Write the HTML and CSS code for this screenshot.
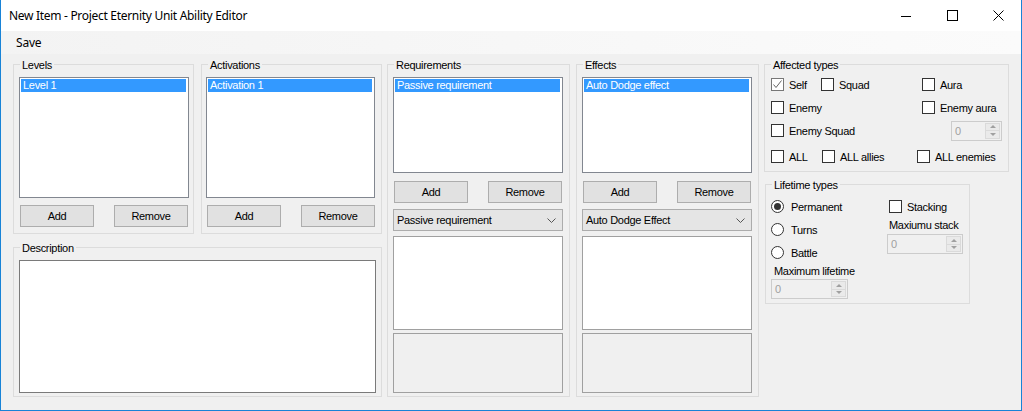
FILE: index.html
```html
<!DOCTYPE html>
<html>
<head>
<meta charset="utf-8">
<title>New Item - Project Eternity Unit Ability Editor</title>
<link rel="stylesheet" href="styles.css">
</head>
<body>
<div class="window">
  <div class="titlebar">
    <span class="title">New Item - Project Eternity Unit Ability Editor</span>
    <div class="controls">
      <div class="ctl"><svg width="10" height="10" viewBox="0 0 10 10"><line x1="0" y1="5.5" x2="10" y2="5.5" stroke="#000" stroke-width="1"/></svg></div>
      <div class="ctl"><svg width="11" height="11" viewBox="0 0 11 11"><rect x="0.5" y="0.5" width="10" height="10" fill="none" stroke="#000" stroke-width="1"/></svg></div>
      <div class="ctl"><svg width="11" height="11" viewBox="0 0 11 11"><path d="M0.5 0.5 L10.5 10.5 M10.5 0.5 L0.5 10.5" stroke="#000" stroke-width="1" fill="none"/></svg></div>
    </div>
  </div>
  <div class="menubar"><span class="menu-item">Save</span></div>
  <div class="client">
    <div class="col-left">
      <div class="row-top">
        <div class="gb gb-levels">
          <div class="gb-title">Levels</div>
          <div class="list list-a"><div class="item sel">Level 1</div></div>
          <div class="btnrow btnrow-a"><div class="btn">Add</div><div class="btn">Remove</div></div>
        </div>
        <div class="gb gb-act">
          <div class="gb-title">Activations</div>
          <div class="list list-b"><div class="item sel">Activation 1</div></div>
          <div class="btnrow btnrow-b"><div class="btn">Add</div><div class="btn">Remove</div></div>
        </div>
      </div>
      <div class="gb gb-desc">
        <div class="gb-title">Description</div>
        <div class="textbox"></div>
      </div>
    </div>
    <div class="gb gb-req">
      <div class="gb-title">Requirements</div>
      <div class="list list-c"><div class="item sel">Passive requirement</div></div>
      <div class="btnrow btnrow-c"><div class="btn">Add</div><div class="btn">Remove</div></div>
      <div class="combo"><span>Passive requirement</span><svg width="9" height="5" viewBox="0 0 9 5"><polyline points="0.5,0.5 4.5,4.5 8.5,0.5" fill="none" stroke="#555" stroke-width="1"/></svg></div>
      <div class="panel white"></div>
      <div class="panel grey"></div>
    </div>
    <div class="gb gb-eff">
      <div class="gb-title">Effects</div>
      <div class="list list-c"><div class="item sel">Auto Dodge effect</div></div>
      <div class="btnrow btnrow-c"><div class="btn">Add</div><div class="btn">Remove</div></div>
      <div class="combo"><span>Auto Dodge Effect</span><svg width="9" height="5" viewBox="0 0 9 5"><polyline points="0.5,0.5 4.5,4.5 8.5,0.5" fill="none" stroke="#555" stroke-width="1"/></svg></div>
      <div class="panel white"></div>
      <div class="panel grey"></div>
    </div>
    <div class="col-right">
      <div class="gb gb-aff">
        <div class="gb-title">Affected types</div>
        <div class="crow r1">
          <div class="chk w50"><span class="box checked"><svg width="11" height="11" viewBox="0 0 11 11"><polyline points="1.5,5.5 4,8.5 9.5,1.5" fill="none" stroke="#666" stroke-width="1"/></svg></span><span>Self</span></div>
          <div class="chk w101"><span class="box"></span><span>Squad</span></div>
          <div class="chk"><span class="box"></span><span>Aura</span></div>
        </div>
        <div class="crow">
          <div class="chk w151"><span class="box"></span><span>Enemy</span></div>
          <div class="chk"><span class="box"></span><span>Enemy aura</span></div>
        </div>
        <div class="crow">
          <div class="chk w180"><span class="box"></span><span>Enemy Squad</span></div>
          <div class="spin w51"><span class="spin-val">0</span><span class="spin-btns"><span class="up"></span><span class="dn"></span></span></div>
        </div>
        <div class="crow r4">
          <div class="chk w51"><span class="box"></span><span>ALL</span></div>
          <div class="chk w95"><span class="box"></span><span>ALL allies</span></div>
          <div class="chk"><span class="box"></span><span>ALL enemies</span></div>
        </div>
      </div>
      <div class="gb gb-life">
        <div class="gb-title">Lifetime types</div>
        <div class="life">
          <div class="life-l">
            <div class="crow r1"><div class="chk"><span class="radio on"></span><span class="rlabel">Permanent</span></div></div>
            <div class="crow"><div class="chk"><span class="radio"></span><span class="rlabel">Turns</span></div></div>
            <div class="crow"><div class="chk"><span class="radio"></span><span class="rlabel">Battle</span></div></div>
            <div class="flabel fl-life">Maximum lifetime</div>
            <div class="spin w77 sp-life"><span class="spin-val">0</span><span class="spin-btns"><span class="up"></span><span class="dn"></span></span></div>
          </div>
          <div class="life-r">
            <div class="crow r1 stk"><div class="chk"><span class="box"></span><span>Stacking</span></div></div>
            <div class="flabel fl-stack">Maxiumu stack</div>
            <div class="spin w76 sp-stack"><span class="spin-val">0</span><span class="spin-btns"><span class="up"></span><span class="dn"></span></span></div>
          </div>
        </div>
      </div>
    </div>
  </div>
</div>
</body>
</html>
```
FILE: styles.css
```css
* { box-sizing: border-box; }
html, body { margin: 0; padding: 0; background: #f0f0f0; }
body { font-family: "Liberation Sans", Arial, sans-serif; font-size: 11px; letter-spacing: -0.3px; color: #000; }

.window {
  width: 1022px; height: 411px;
  border-left: 1px solid #1883d7; border-right: 1px solid #1883d7; border-bottom: 1px solid #1883d7;
  background: #f0f0f0;
  display: flex; flex-direction: column;
  overflow: hidden;
}

.titlebar { height: 31px; background: #fff; display: flex; align-items: center; }
.title { font-family: "Noto Sans", "Open Sans", sans-serif; font-size: 12px; letter-spacing: -0.3px; padding-left: 8px; flex: 1; color: #000; }
.controls { display: flex; align-self: stretch; }
.ctl { width: 46px; display: flex; align-items: center; justify-content: center; }
.ctl svg { display: block; }

.menubar { height: 23px; background: linear-gradient(to right, #f3f3f3, #fbfbfb); display: flex; align-items: center; }
.menu-item { font-family: "Noto Sans", "Open Sans", sans-serif; font-size: 12px; letter-spacing: -0.2px; padding-left: 15px; }

.client { flex: 1; display: flex; align-items: flex-start; padding: 10px 0 0 12px; }

.col-left { display: flex; flex-direction: column; width: 369px; }
.row-top { display: flex; gap: 7px; }

.gb { border: 1px solid #dcdcdc; padding-left: var(--pl, 5px); }
.gb-title {
  width: fit-content; height: 15px; line-height: 15px;
  margin: -7px 0 0 calc(6px - var(--pl, 5px));
  padding: 0 2px; background: #f0f0f0; white-space: nowrap;
}

.gb-levels { width: 181px; height: 170px; --pl: 5px; }
.gb-act { width: 181px; height: 170px; --pl: 4px; }
.gb-desc { width: 369px; height: 150px; margin-top: 13px; --pl: 5px; }
.gb-req { width: 183px; height: 333px; margin-left: 5px; --pl: 5px; }
.gb-eff { width: 183px; height: 333px; margin-left: 6px; --pl: 5px; }
.col-right { margin-left: 5px; display: flex; flex-direction: column; }
.gb-aff { width: 245px; height: 108px; --pl: 6px; }
.gb-life { width: 205px; height: 120px; margin: 12px 0 0 1px; --pl: 5px; }

.list { background: #fff; border: 1px solid #828790; margin-top: 4px; padding-top: 0; }
.list-a { width: 170px; height: 121px; }
.list-b { width: 169px; height: 121px; }
.list-c { width: 170px; height: 96px; }
.item { height: 13px; line-height: 13px; margin: 1px 2px 0 1px; padding-left: 2px; white-space: nowrap; }
.item.sel { background: #3399ff; color: #fff; }

.btnrow { display: flex; gap: 20px; }
.btnrow-a { margin: 7px 0 0 1px; }
.btnrow-b { margin: 7px 0 0 1px; }
.btnrow-c { margin: 8px 0 0 1px; }
.btn { width: 74px; height: 22px; background: #e1e1e1; border: 1px solid #adadad; display: flex; align-items: center; justify-content: center; }

.textbox { width: 357px; height: 133px; margin-top: 4px; background: #fff; border: 1px solid #7a7a7a; }

.combo { width: 170px; height: 22px; margin-top: 6px; background: #e5e5e5; border: 1px solid #acacac; display: flex; align-items: center; justify-content: space-between; padding: 0 6px 0 3px; }
.combo svg { display: block; }

.panel { width: 170px; border: 1px solid #a0a0a0; }
.panel.white { height: 94px; margin-top: 5px; background: #fff; }
.panel.grey { height: 60px; margin-top: 3px; background: #f0f0f0; }

.crow { height: 23px; display: flex; align-items: center; }
.gb-aff .r1 { margin-top: 0; }
.gb-aff .r4 { margin-top: 3px; }
.chk { display: flex; align-items: center; white-space: nowrap; }
.w50 { width: 50px; } .w101 { width: 101px; } .w151 { width: 151px; } .w180 { width: 180px; }
.w51 { width: 51px; } .w95 { width: 95px; } .w77 { width: 77px; } .w76 { width: 76px; }
.box { width: 13px; height: 13px; border: 1px solid #333; background: #fff; margin-right: 5px; flex: none; display: flex; align-items: center; justify-content: center; }
.box.checked { border-color: #777; }
.box svg { display: block; }
.radio { width: 13px; height: 13px; border: 1px solid #333; border-radius: 50%; background: #fff; flex: none; display: flex; align-items: center; justify-content: center; }
.radio.on::after { content: ""; width: 7px; height: 7px; border-radius: 50%; background: #333; }
.rlabel { margin-left: 7px; }

.spin { height: 20px; border: 1px solid #cccccc; background: #f0f0f0; display: flex; }
.spin-val { flex: 1; color: #a0a0a0; line-height: 18px; padding-left: 3px; }
.spin-btns { width: 15px; margin: 1px; display: flex; flex-direction: column; border: 1px solid #dadada; }
.spin-btns span { flex: 1; background: #eaeaea; display: flex; align-items: center; justify-content: center; }
.spin-btns .up { border-bottom: 1px solid #dadada; }
.spin-btns .up::after { content: ""; border-left: 3px solid transparent; border-right: 3px solid transparent; border-bottom: 3px solid #a0a0a0; }
.spin-btns .dn::after { content: ""; border-left: 3px solid transparent; border-right: 3px solid transparent; border-top: 3px solid #a0a0a0; }

.life { display: flex; }
.life-l { width: 116px; }
.life .r1 { margin-top: 2px; }
.flabel { height: 14px; line-height: 14px; white-space: nowrap; }
.fl-life { margin-left: 3px; }
.sp-life { margin-top: 1px; }
.stk { margin-left: 2px; }
.fl-stack { margin-left: 2px; }
.sp-stack { margin-top: 2px; }
```
